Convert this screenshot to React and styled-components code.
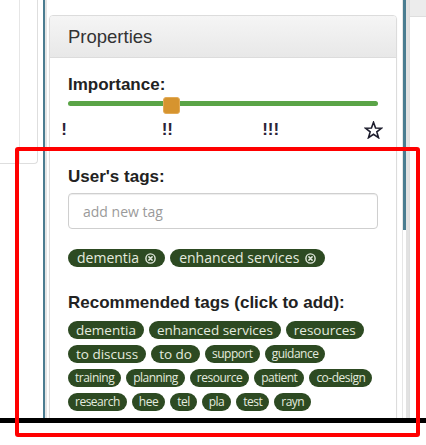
import React from 'react';
import styled, { createGlobalStyle } from 'styled-components';

const GlobalStyle = createGlobalStyle`
html, body {
  margin: 0;
  padding: 0;
  background: #fff;
}
body {
  font-family: "Liberation Sans", Arial, sans-serif;
}
* {
  box-sizing: border-box;
}
`;

const userTags = ['dementia', 'enhanced services'];

const recommended = [
  { label: 'dementia' },
  { label: 'enhanced services' },
  { label: 'resources' },
  { label: 'to discuss' },
  { label: 'to do' },
  { label: 'support', tight: true },
  { label: 'guidance', tight: true },
  { label: 'training', tight: true },
  { label: 'planning', tight: true },
  { label: 'resource', tight: true },
  { label: 'patient', tight: true },
  { label: 'co-design', tight: true },
  { label: 'research', tight: true },
  { label: 'hee', tight: true },
  { label: 'tel', tight: true },
  { label: 'pla', tight: true },
  { label: 'test', tight: true },
  { label: 'rayn', tight: true },
];

const importance = { value: 1, max: 3 };

function CloseIcon() {
  return (
    <svg width="11" height="11" viewBox="0 0 11 11">
      <circle cx="5.5" cy="5.5" r="4.6" fill="none" stroke="currentColor" strokeWidth="1.4" />
      <path d="M3.9 3.9 L7.1 7.1 M7.1 3.9 L3.9 7.1" stroke="currentColor" strokeWidth="1.5" strokeLinecap="round" />
    </svg>
  );
}

function StarIcon() {
  return (
    <svg width="19" height="18" viewBox="0 0 19 18">
      <polygon
        points="9.5,1.3 11.56,6.97 17.58,7.17 12.83,10.88 14.5,16.68 9.5,13.3 4.5,16.68 6.17,10.88 1.42,7.17 7.44,6.97"
        fill="none"
        stroke="#1d1d2d"
        strokeWidth="1.6"
        strokeLinejoin="miter"
      />
    </svg>
  );
}

export default function App() {
  const handleLeft = `${(importance.value / importance.max) * 100}%`;

  return (
    <Page>
      <GlobalStyle />
      <Screen>
        <LeftRail>
          <LeftBox>
            <LeftLine />
          </LeftBox>
        </LeftRail>
        <Splitter />
        <Panel>
          <PanelHeading>Properties</PanelHeading>
          <PanelBody>
            <Label $top={0}>Importance:</Label>
            <SliderWrap>
              <Track>
                <Handle style={{ left: handleLeft }} />
              </Track>
            </SliderWrap>
            <Ticks>
              <Tick>!</Tick>
              <Tick>!!</Tick>
              <Tick>!!!</Tick>
              <Tick><StarIcon /></Tick>
            </Ticks>

            <Label $top={29}>User's tags:</Label>
            <TagInput placeholder="add new tag" />
            <TagList $top={20}>
              {userTags.map(t => (
                <Pill key={t} $size={14} $pad={9}>
                  {t}
                  <CloseIcon />
                </Pill>
              ))}
            </TagList>

            <Label $top={27}>Recommended tags (click to add):</Label>
            <TagList $top={9}>
              {recommended.map(t => (
                <Pill key={t.label} $size={t.tight ? 12 : 13.5} $pad={t.tight ? 7 : 8} $tight={t.tight}>
                  {t.label}
                </Pill>
              ))}
            </TagList>
          </PanelBody>
        </Panel>
        <ScrollTrack>
          <Thumb />
        </ScrollTrack>
        <RightBox>
          <RightHead />
        </RightBox>
      </Screen>
      <Rule />
      <Highlight />
    </Page>
  );
}

const Page = styled.div`
position: relative;
width: 426px;
height: 445px;
overflow: hidden;
background: #fff;
`;

const Screen = styled.div`
display: flex;
height: 418px;
overflow: hidden;
`;

const LeftRail = styled.div`
width: 38px;
flex: none;
`;

const LeftBox = styled.div`
height: 164px;
border-right: 1px solid #dedede;
border-bottom: 1px solid #dedede;
border-bottom-right-radius: 4px;
`;

const LeftLine = styled.div`
width: 20px;
height: 100%;
border-right: 1px solid #e6e6e6;
`;

const Splitter = styled.div`
flex: none;
width: 4px;
margin-left: 5px;
border-left: 2px solid #4a7c90;
border-right: 2px solid #e4e4e4;
`;

const Panel = styled.div`
flex: none;
align-self: flex-start;
width: 348px;
margin-top: 15px;
margin-left: 2px;
border: 1px solid #dcdcdc;
border-radius: 4px;
box-shadow: 0 1px 2px rgba(0, 0, 0, 0.05);
`;

const PanelHeading = styled.div`
padding: 10px 18px;
line-height: 21px;
font-size: 18.5px;
color: #333;
background: linear-gradient(#f5f5f5, #e8e8e8);
border-bottom: 1px solid #dcdcdc;
border-radius: 3px 3px 0 0;
`;

const PanelBody = styled.div`
padding: 18px 18px 30px;
`;

const Label = styled.div`
margin-top: ${p => p.$top}px;
font-size: 17px;
line-height: 18px;
font-weight: 700;
color: #222;
`;

const SliderWrap = styled.div`
height: 17px;
margin-top: 3px;
padding-top: 4px;
`;

const Track = styled.div`
position: relative;
height: 5px;
border-radius: 3px;
background: #5aa447;
`;

const Handle = styled.div`
position: absolute;
top: -4px;
width: 17px;
height: 17px;
margin-left: -8px;
background: #d6942f;
border: 1px solid #e2ab58;
border-radius: 3px;
`;

const Ticks = styled.div`
display: flex;
justify-content: space-between;
margin: 7px -6px 0 -14px;
height: 18px;
`;

const Tick = styled.div`
width: 20px;
text-align: center;
font-size: 17px;
line-height: 18px;
font-weight: 700;
color: #2c2438;
svg {
  display: block;
  margin: 0 auto;
}
`;

const TagInput = styled.input`
display: block;
width: 100%;
height: 36px;
margin-top: 7px;
padding: 0 14px;
border: 1px solid #cfcfcf;
border-radius: 4px;
box-shadow: inset 0 1px 1px rgba(0, 0, 0, 0.075);
font-family: "Open Sans", sans-serif;
font-size: 14px;
color: #555;
outline: none;
&::placeholder {
  color: #9a9a9a;
}
`;

const TagList = styled.div`
display: flex;
flex-wrap: wrap;
gap: 6px 5px;
margin-top: ${p => p.$top}px;
`;

const Pill = styled.span`
display: inline-flex;
align-items: center;
gap: 6px;
height: 18px;
padding: 0 ${p => p.$pad}px;
border-radius: 9px;
background: #2d4a22;
color: #e4ebdf;
font-family: "Open Sans", sans-serif;
font-size: ${p => p.$size}px;
letter-spacing: ${p => (p.$tight ? '-0.5px' : '0')};
line-height: 18px;
white-space: nowrap;
svg {
  display: block;
}
`;

const ScrollTrack = styled.div`
flex: none;
width: 7px;
margin-left: 5px;
border-left: 1px solid #e6e6e6;
border-right: 3px solid #e2e2e2;
`;

const Thumb = styled.div`
width: 3px;
height: 230px;
background: #4a7c90;
`;

const RightBox = styled.div`
flex: 1;
border-left: 1px solid #dedede;
`;

const RightHead = styled.div`
height: 17px;
background: #ececec;
border-bottom: 1px solid #dedede;
`;

const Rule = styled.div`
height: 5px;
background: #000;
`;

const Highlight = styled.div`
position: absolute;
left: 15px;
top: 147px;
width: 405px;
height: 290px;
border: 4px solid #ff0000;
border-radius: 3px;
pointer-events: none;
`;
